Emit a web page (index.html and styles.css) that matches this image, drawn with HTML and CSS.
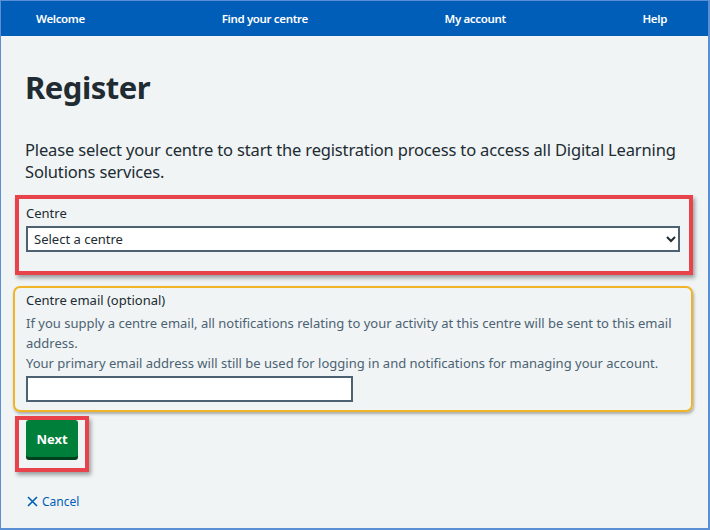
FILE: index.html
```html
<!DOCTYPE html>
<html lang="en">
<head>
<meta charset="utf-8">
<title>Register</title>
<link rel="stylesheet" href="styles.css">
</head>
<body>
<div class="frame">
  <header class="topnav">
    <a href="#">Welcome</a>
    <a href="#">Find your centre</a>
    <a href="#">My account</a>
    <a href="#">Help</a>
  </header>
  <main class="content">
    <h1 class="title">Register</h1>
    <p class="lead">Please select your centre to start the registration process to access all Digital Learning Solutions services.</p>

    <div class="mark-red mark-centre">
      <label class="label" for="centre">Centre</label>
      <select id="centre" class="select">
        <option>Select a centre</option>
      </select>
    </div>

    <div class="mark-orange">
      <label class="label" for="email">Centre email (optional)</label>
      <div class="hint">
        <p>If you supply a centre email, all notifications relating to your activity at this centre will be sent to this email address.</p>
        <p>Your primary email address will still be used for logging in and notifications for managing your account.</p>
      </div>
      <input id="email" class="input" type="text">
    </div>

    <div class="mark-red mark-btn">
      <button class="btn" type="button">Next</button>
    </div>

    <a class="cancel" href="#">
      <svg width="11" height="11" viewBox="0 0 11 11" aria-hidden="true"><path d="M1 1 L10 10 M10 1 L1 10" stroke="#005eb8" stroke-width="1.6" fill="none"/></svg>
      <span>Cancel</span>
    </a>
  </main>
</div>
</body>
</html>
```
FILE: styles.css
```css
* { box-sizing: border-box; }
html, body { margin: 0; padding: 0; }
body {
  font-family: "Noto Sans", "Open Sans", sans-serif;
  color: #212b32;
  background: #f0f4f5;
}
.frame {
  width: 710px;
  height: 530px;
  border: 1px solid #5a8fd6;
  border-right-width: 2px;
  border-bottom-width: 2px;
  background: #f0f4f5;
  overflow: hidden;
}
.topnav {
  height: 35px;
  background: #005eb8;
  display: flex;
  align-items: center;
  justify-content: space-between;
  padding: 0 41px 0 35px;
}
.topnav a {
  color: #fff;
  text-decoration: none;
  font-size: 11.5px;
  font-weight: 600;
  letter-spacing: -0.35px;
}
.content {
  padding: 0 22px 0 24px;
}
.title {
  margin: 31px 0 0;
  font-size: 31px;
  line-height: 40px;
  font-weight: 700;
  letter-spacing: -0.5px;
}
.lead {
  margin: 32px 0 0;
  font-size: 16.5px;
  line-height: 22px;
  letter-spacing: -0.16px;
}
.mark-red {
  border: 4px solid #e8434b;
  box-shadow: 2px 3px 4px rgba(0,0,0,0.35);
}
.mark-centre {
  margin: 12px 0 0 -10px;
  width: 678px;
  padding: 5px 6px 19px 7px;
}
.label {
  display: block;
  font-size: 13px;
  line-height: 18px;
}
.select {
  display: block;
  width: 654px;
  height: 26px;
  margin-top: 4px;
  border: 1px solid #4c6272;
  outline: 1px solid #4c6272;
  outline-offset: -2px;
  background: #fff;
  font-family: inherit;
  font-size: 13px;
  color: #212b32;
  padding: 0 3px;
  border-radius: 0;
}
.mark-orange {
  margin: 11px 0 0 -12px;
  width: 680px;
  border: 2px solid #f0b429;
  border-radius: 7px;
  box-shadow: 1px 2px 3px rgba(0,0,0,0.3);
  padding: 3px 10px 8px 11px;
}
.hint {
  margin-top: 4px;
  color: #4c6272;
  font-size: 13px;
  line-height: 20px;
}
.hint p { margin: 0; }
.input {
  display: block;
  width: 327px;
  height: 26px;
  margin-top: 3px;
  border: 2px solid #4c6272;
  background: #fff;
}
.mark-btn {
  margin: 4px 0 0 -10px;
  width: 74px;
  padding: 0 7px 8px 7px;
}
.btn {
  display: block;
  width: 52px;
  height: 37px;
  margin-bottom: 3px;
  background: #007f3b;
  color: #fff;
  border: 0;
  border-radius: 3px;
  box-shadow: 0 3px 0 #00401e;
  font-family: inherit;
  font-size: 13px;
  font-weight: 700;
}
.cancel {
  display: inline-flex;
  align-items: center;
  gap: 4px;
  margin: 21px 0 0 2px;
  color: #005eb8;
  text-decoration: none;
  font-size: 12px;
}
```
